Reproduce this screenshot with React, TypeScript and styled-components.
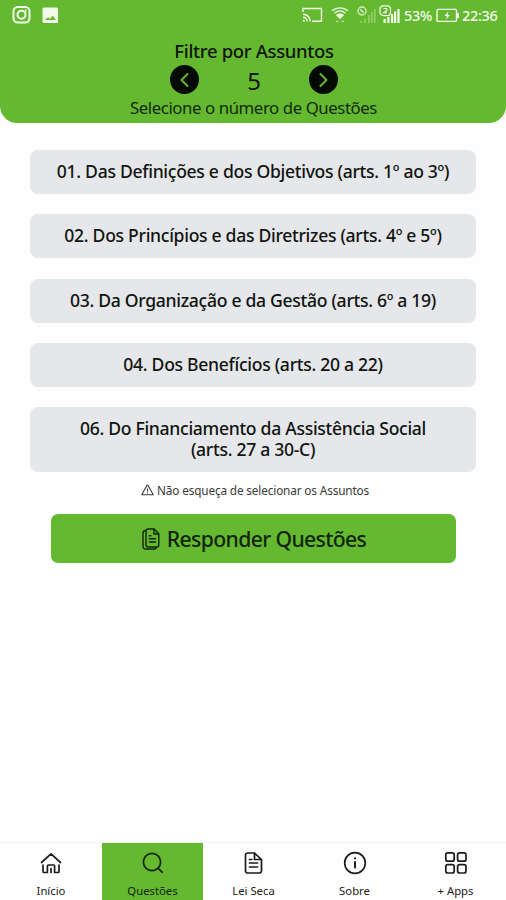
import React from 'react';
import styled, { createGlobalStyle, css } from 'styled-components';

const GREEN = '#64b931';

const GlobalStyle = createGlobalStyle`
  * { box-sizing: border-box; }
  body { margin: 0; background: #fefefe; font-family: "Noto Sans", "Open Sans", sans-serif; color: #10140e; }
  button { font: inherit; color: inherit; border: 0; padding: 0; background: none; }
  svg { display: block; flex: none; }
`;

const Screen = styled.div`
  width: 506px;
  height: 900px;
  display: flex;
  flex-direction: column;
  overflow: hidden;
`;

const Header = styled.header`
  height: 123px;
  flex: none;
  background: ${GREEN};
  border-radius: 0 0 17px 17px;
  display: flex;
  flex-direction: column;
  align-items: center;
`;

const StatusBar = styled.div`
  width: 100%;
  height: 30px;
  padding: 0 8px 0 12px;
  display: flex;
  align-items: center;
  justify-content: space-between;
  color: #f3fbe9;
`;

const StatusGroup = styled.div<{ $gap: number }>`
  display: flex;
  align-items: center;
  gap: ${(p) => p.$gap}px;
`;

const StatusText = styled.span<{ $width: number }>`
  width: ${(p) => p.$width}px;
  font: 500 14.5px/20px "Noto Sans", sans-serif;
  letter-spacing: -0.35px;
  white-space: nowrap;
`;

const line = css<{ $size: number; $spacing?: number; $weight?: number; $height: number }>`
  font-size: ${(p) => p.$size}px;
  line-height: ${(p) => p.$height}px;
  letter-spacing: ${(p) => p.$spacing ?? 0}px;
  font-weight: ${(p) => p.$weight ?? 400};
  white-space: nowrap;
`;

const Title = styled.h1`
  margin: 9px 0 0 2px;
  ${line}
`;

const Caption = styled.p`
  margin: 3px 0 0 1px;
  color: #14290a;
  ${line}
`;

const Stepper = styled.div`
  width: 168px;
  height: 29px;
  margin: 3px 0 0 2px;
  display: flex;
  align-items: center;
  justify-content: space-between;
`;

const Count = styled.span`
  padding-top: 3px;
  ${line}
`;

const RoundButton = styled.button`
  width: 29px;
  height: 29px;
  border-radius: 50%;
  background: #050a03;
  display: grid;
  place-items: center;
`;

const Main = styled.main`
  flex: 1;
  padding-top: 27px;
  display: flex;
  flex-direction: column;
  align-items: center;
`;

const TopicList = styled.div`
  width: 446px;
  display: flex;
  flex-direction: column;
  gap: 20.3px;
`;

const Topic = styled.button`
  min-height: 44px;
  padding: 11px 24px 12px;
  border-radius: 8px;
  background: #e6e7eb;
  text-align: center;
`;

const TopicText = styled.span`
  display: block;
  ${line}
  white-space: pre-line;
`;

const Notice = styled.div`
  height: 18px;
  margin-top: 9px;
  padding-left: 4px;
  display: flex;
  align-items: center;
  gap: 3px;
  color: #3b3b3b;
`;

const NoticeText = styled.span`
  ${line}
`;

const Submit = styled.button`
  width: 405px;
  height: 49px;
  margin-top: 15px;
  padding-left: 2px;
  border-radius: 7px;
  background: ${GREEN};
  display: flex;
  align-items: center;
  justify-content: center;
  gap: 7px;
  color: #12240a;
`;

const SubmitText = styled.span`
  ${line}
`;

const TabBar = styled.nav`
  height: 58px;
  flex: none;
  border-top: 1px solid #f2f2f2;
  display: grid;
  grid-template-columns: 102px 101px 101px 101px 101px;
`;

const Tab = styled.button<{ $active?: boolean }>`
  padding-top: 8px;
  display: flex;
  flex-direction: column;
  align-items: center;
  gap: 8px;
  background: ${(p) => (p.$active ? GREEN : 'transparent')};
  color: ${(p) => (p.$active ? '#12240a' : '#1c1c1c')};
`;

const TabLabel = styled.span`
  ${line}
`;

const TabIcon = ({ children }: { children: React.ReactNode }) => (
  <svg width="24" height="24" viewBox="0 0 24 24" fill="none" stroke="currentColor" strokeWidth="1.7" strokeLinecap="round" strokeLinejoin="round">
    {children}
  </svg>
);

const InstagramIcon = () => (
  <svg width="19" height="18" viewBox="0 0 19 18" fill="none" stroke="currentColor">
    <rect x="1.5" y="1" width="16" height="15.5" rx="4.2" strokeWidth="2" />
    <circle cx="9.5" cy="8.8" r="4" strokeWidth="2" />
    <circle cx="13.9" cy="4.4" r="1" fill="currentColor" stroke="none" />
  </svg>
);

const PictureIcon = () => (
  <svg width="17" height="17" viewBox="0 0 17 17">
    <rect x="0.5" y="0.5" width="15.5" height="15.5" rx="1.5" fill="currentColor" />
    <path d="M3 13 6 10.2l2 1.6 2.8-3 3.2 4.2z" fill={GREEN} />
  </svg>
);

const CastIcon = () => (
  <svg width="21" height="16" viewBox="0 0 21 16" fill="none" stroke="currentColor" strokeWidth="1.4">
    <path d="M1 5V1.5h18.5v12.7H10" />
    <path d="M1 7.2a7.2 7.2 0 0 1 7.2 7.2M1 10.2a4.2 4.2 0 0 1 4.2 4.2" />
    <path d="M1 12.4a2 2 0 0 1 2 2H1z" fill="currentColor" stroke="none" />
  </svg>
);

const WifiIcon = () => (
  <svg width="18" height="18" viewBox="0 0 18 18" fill="none" stroke="currentColor" strokeWidth="1.3">
    <path d="M1 4.8c4.7-4 11.3-4 16 0M3.5 7.2c3.3-2.7 7.7-2.7 11 0" />
    <path d="M5 8.9c2.3-1.9 5.7-1.9 8 0l-4 4.3z" fill="currentColor" stroke="none" />
    <path d="M5 14.6 6.3 16.2l1.2-1.6M10.6 16.2l1.2-1.6 1.2 1.6" strokeWidth="1" opacity=".75" />
  </svg>
);

const SignalIcon = ({ sim }: { sim?: boolean }) => (
  <svg width={sim ? 21 : 19} height="20" viewBox={sim ? '0 0 21 20' : '0 0 19 20'}>
    {sim ? (
      <>
        <path d="M4.5 14h2.2v4H4.5zM8.3 12h2.2v6H8.3zM12 9h2.2v9H12zM15 6.5h2.2V18H15zM18.4 4h2.2v14h-2.2z" fill="currentColor" />
        <rect x="1" y="0.8" width="10.5" height="9.8" rx="3.2" fill={GREEN} stroke="currentColor" strokeWidth="1.2" />
        <path d="M4.5 3.5h3.2v2L4.7 7.7H8" fill="none" stroke="currentColor" strokeWidth="1.1" />
      </>
    ) : (
      <>
        <path d="M3.5 16h1.6v2H3.5zM7.3 14h1.6v4H7.3zM11 10h1.6v8H11zM14 7h1.6v11H14zM17 4h1.6v14H17z" fill="currentColor" opacity=".35" />
        <circle cx="5" cy="6" r="4" fill="none" stroke="currentColor" strokeWidth="1.3" opacity=".8" />
        <path d="m3.3 4.5 3.2 3" stroke="currentColor" strokeWidth="1.2" />
      </>
    )}
  </svg>
);

const BatteryIcon = () => (
  <svg width="24" height="15" viewBox="0 0 24 15" fill="none" stroke="currentColor" strokeWidth="1.4">
    <rect x="1" y="1.4" width="19.5" height="12" rx="1" />
    <path d="M22 5v5" strokeWidth="2" />
    <path d="M12.4 3.6 8.4 8h2.5l-1 3.5L14 7h-2.6z" fill="currentColor" stroke="none" />
  </svg>
);

const Chevron = ({ right }: { right?: boolean }) => (
  <svg width="18" height="18" viewBox="0 0 18 18" fill="none" stroke={GREEN} strokeWidth="2" strokeLinecap="round" strokeLinejoin="round">
    <path d={right ? 'M6.5 3l6 6-6 6' : 'M11.5 3l-6 6 6 6'} />
  </svg>
);

const WarningIcon = () => (
  <svg width="13" height="12" viewBox="0 0 13 12" fill="none" stroke="currentColor" strokeWidth="1.1" strokeLinejoin="round">
    <path d="M6 1.2h1l5.2 9.6H.8z" />
    <path d="M6.5 4.5v3M6.5 8.6v1" />
  </svg>
);

const PagesIcon = () => (
  <svg width="18" height="22" viewBox="0 0 18 22" fill="none" stroke="currentColor" strokeWidth="1.4" strokeLinejoin="round">
    <path d="M3.6 2.5A2.6 2.6 0 0 0 1 5v13.4A2.5 2.5 0 0 0 3.5 21h8.7a2.5 2.5 0 0 0 2.4-1.8" />
    <path d="M6 1h6.2l4.6 4.7V17a2 2 0 0 1-2 2H6a2 2 0 0 1-2-2V3a2 2 0 0 1 2-2z" />
    <path d="M12 1v5h4.8M6.8 10.8h7.2M6.8 14h7.2M6.8 7.7h2.6" />
  </svg>
);

const topics = [
  '01. Das Definições e dos Objetivos (arts. 1º ao 3º)',
  '02. Dos Princípios e das Diretrizes (arts. 4º e 5º)',
  '03. Da Organização e da Gestão (arts. 6º a 19)',
  '04. Dos Benefícios (arts. 20 a 22)',
  '06. Do Financiamento da Assistência Social\n(arts. 27 a 30-C)',
];

const tabs = [
  {
    label: 'Início',
    icon: <path d="M2.5 11.5 12 2.8l9.5 8.7M4 14v6.5a1 1 0 0 0 1 1h3.4V15a1 1 0 0 1 1-1h5.2a1 1 0 0 1 1 1v6.5H19a1 1 0 0 0 1-1V14M12 17.5v4" />,
  },
  { label: 'Questões', icon: <><circle cx="11" cy="11" r="8.6" /><path d="m17.3 17.3 4 4" /></>, active: true },
  {
    label: 'Lei Seca',
    icon: <path d="M12.5 2H5.7a2.2 2.2 0 0 0-2.2 2.2v15.6A2.2 2.2 0 0 0 5.7 22h11.6a2.2 2.2 0 0 0 2.2-2.2V8.5zM12.5 2v6.5h7M7.5 12h8M7.5 16h8M7.5 8.5h2.3" />,
  },
  { label: 'Sobre', icon: <><circle cx="12" cy="12" r="10.3" /><path d="M12 11v5.5M12 7.2v.3" strokeWidth="2" /></> },
  {
    label: '+ Apps',
    icon: <><rect x="1.8" y="1.8" width="8.4" height="8.4" rx="2" /><rect x="13.6" y="1.8" width="8.4" height="8.4" rx="2" /><rect x="1.8" y="13.6" width="8.4" height="8.4" rx="2" /><rect x="13.6" y="13.6" width="8.4" height="8.4" rx="2" /></>,
  },
];

export default function App() {
  return (
    <Screen>
      <GlobalStyle />
      <Header>
        <StatusBar>
          <StatusGroup $gap={11}>
            <InstagramIcon />
            <PictureIcon />
          </StatusGroup>
          <StatusGroup $gap={4}>
            <StatusGroup $gap={8}>
              <CastIcon />
              <WifiIcon />
              <StatusGroup $gap={3}>
                <SignalIcon />
                <SignalIcon sim />
              </StatusGroup>
            </StatusGroup>
            <StatusGroup $gap={2}>
              <StatusText $width={30}>53%</StatusText>
              <BatteryIcon />
              <StatusText $width={36}>22:36</StatusText>
            </StatusGroup>
          </StatusGroup>
        </StatusBar>
        <Title $size={18.5} $spacing={-0.34} $height={23} $weight={500}>Filtre por Assuntos</Title>
        <Stepper>
          <RoundButton aria-label="Menos"><Chevron /></RoundButton>
          <Count $size={24} $height={28}>5</Count>
          <RoundButton aria-label="Mais"><Chevron right /></RoundButton>
        </Stepper>
        <Caption $size={16.8} $spacing={-0.42} $height={22}>Selecione o número de Questões</Caption>
      </Header>
      <Main>
        <TopicList>
          {topics.map((text) => (
            <Topic key={text}>
              <TopicText $size={17.6} $spacing={-0.31} $height={21} $weight={500}>{text}</TopicText>
            </Topic>
          ))}
        </TopicList>
        <Notice>
          <WarningIcon />
          <NoticeText $size={11.8} $spacing={-0.15} $height={16}>Não esqueça de selecionar os Assuntos</NoticeText>
        </Notice>
        <Submit>
          <PagesIcon />
          <SubmitText $size={21.2} $spacing={-0.64} $height={28} $weight={500}>Responder Questões</SubmitText>
        </Submit>
      </Main>
      <TabBar>
        {tabs.map(({ label, icon, active }) => (
          <Tab key={label} $active={active}>
            <TabIcon>{icon}</TabIcon>
            <TabLabel $size={11.3} $height={16}>{label}</TabLabel>
          </Tab>
        ))}
      </TabBar>
    </Screen>
  );
}
